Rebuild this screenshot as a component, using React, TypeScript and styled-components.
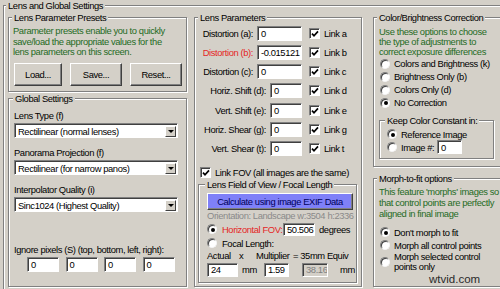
import styled, { createGlobalStyle } from "styled-components";

const FACE = "#d4d0c8";
const GREEN = "#1f6b1f";
const RED = "#e42626";

const GlobalStyle = createGlobalStyle`
  * { box-sizing: border-box; }
  html, body { margin: 0; padding: 0; background: ${FACE}; }
  body {
    font-family: "Liberation Sans", Arial, sans-serif;
    font-size: 9.4px;
    letter-spacing: -0.4px;
    color: #000;
  }
`;

const Window = styled.div`
  position: relative;
  width: 500px;
  height: 289px;
  overflow: hidden;
  background: ${FACE};
`;

const Group = styled.fieldset<{ $w?: number; $h: number; $mt?: number; $ml?: number }>`
  margin: ${(p) => p.$mt ?? 0}px 0 0 ${(p) => p.$ml ?? 0}px;
  padding: 0;
  min-inline-size: 0;
  flex-shrink: 0;
  width: ${(p) => (p.$w ? `${p.$w}px` : "auto")};
  height: ${(p) => p.$h}px;
  border: 1px solid #808080;
  box-shadow: inset 1px 1px 0 #fff, 1px 1px 0 #fff;
`;

const Legend = styled.legend<{ $x?: number }>`
  margin-left: ${(p) => p.$x ?? 3}px;
  padding: 0 2px;
  height: 11px;
  line-height: 11px;
  background: ${FACE};
  white-space: nowrap;
`;

const Columns = styled.div`
  display: flex;
  align-items: flex-start;
  padding: 1px 0 0 4px;
`;

const LeftCol = styled.div`
  width: 179px;
  display: flex;
  flex-direction: column;
  gap: 1px;
`;

const MidCol = styled.div`
  width: 168px;
  margin-left: 7px;
`;

const RightCol = styled.div`
  width: 132px;
  margin-left: 11px;
  display: flex;
  flex-direction: column;
`;

const Hint = styled.div<{ $lh: number }>`
  color: ${GREEN};
  line-height: ${(p) => p.$lh}px;
  white-space: nowrap;
`;

const PresetsBody = styled.div`
  padding: 3px 0 0 4px;
`;

const ButtonRow = styled.div`
  display: flex;
  gap: 8px;
  margin: 5.5px 0 0 1px;
`;

const PushButton = styled.div<{ $w: number }>`
  width: ${(p) => p.$w}px;
  height: 23px;
  display: flex;
  align-items: center;
  justify-content: center;
  background: ${FACE};
  border: 1px solid;
  border-color: #fff #404040 #404040 #fff;
  box-shadow: inset -1px -1px 0 #808080;
`;

const GlobalBody = styled.div`
  display: flex;
  flex-direction: column;
  padding: 6px 0 0 5px;
`;

const FieldLabel = styled.div<{ $mt?: number }>`
  height: 11px;
  line-height: 11px;
  margin: ${(p) => p.$mt ?? 0}px 0 2px;
  white-space: nowrap;
`;

const Sunken = `
  background: #fff;
  border: 1px solid;
  border-color: #808080 #fff #fff #808080;
  box-shadow: inset 1px 1px 0 #404040;
`;

const Select = styled.div<{ $last?: boolean }>`
  ${Sunken}
  width: 164px;
  height: 15px;
  display: flex;
  align-items: center;
  padding: 1px 1px 0 2px;
  margin-bottom: ${(p) => (p.$last ? 0 : 9)}px;
`;

const SelectText = styled.span`
  flex: 1;
  padding-left: 1px;
  white-space: nowrap;
  overflow: hidden;
`;

const DropArrow = styled.span`
  width: 11px;
  height: 11px;
  display: flex;
  align-items: center;
  justify-content: center;
  background: ${FACE};
  border: 1px solid;
  border-color: #fff #404040 #404040 #fff;

  &::after {
    content: "";
    border-left: 3px solid transparent;
    border-right: 3px solid transparent;
    border-top: 3px solid #000;
  }
`;

const TextBox = styled.div<{ $w: number; $h?: number; $ml?: number; $off?: boolean }>`
  ${Sunken}
  flex-shrink: 0;
  width: ${(p) => p.$w}px;
  height: ${(p) => p.$h ?? 15}px;
  margin-left: ${(p) => p.$ml ?? 0}px;
  padding-left: 3px;
  display: flex;
  align-items: center;
  white-space: nowrap;
  overflow: hidden;
  background: ${(p) => (p.$off ? FACE : "#fff")};
  color: ${(p) => (p.$off ? "#808080" : "#000")};
`;

const IgnoreRow = styled.div`
  display: flex;
  gap: 6.5px;
  padding-left: 13px;
`;

const ParamsBody = styled.div`
  display: flex;
  flex-direction: column;
  padding: 0.5px 0 0 3px;
`;

const ParamRow = styled.div`
  display: flex;
  align-items: center;
  height: 19.25px;
`;

const ParamField = styled.div`
  width: 104px;
  display: flex;
  justify-content: flex-end;
  align-items: center;
  gap: 4px;
`;

const ParamName = styled.span<{ $red?: boolean }>`
  color: ${(p) => (p.$red ? RED : "#000")};
  white-space: nowrap;
`;

const CheckBox = styled.span<{ $ml?: number }>`
  ${Sunken}
  flex-shrink: 0;
  width: 11px;
  height: 11px;
  margin-left: ${(p) => p.$ml ?? 0}px;
  display: flex;
  align-items: center;
  justify-content: center;
  padding: 1px 0 0 1px;
`;

const LinkText = styled.span`
  margin-left: 4px;
  white-space: nowrap;
`;

const FovLink = styled.div`
  display: flex;
  align-items: center;
  height: 11px;
  margin: 8.5px 0 0 2px;
`;

const FovBody = styled.div`
  display: flex;
  flex-direction: column;
  padding: 0 3px 0 8px;
`;

const CalcButton = styled.div`
  height: 17px;
  margin-top: 3.5px;
  display: flex;
  align-items: center;
  justify-content: center;
  background: #7f80f8;
  color: #00005a;
  white-space: nowrap;
  border: 1px solid;
  border-color: #fff #404040 #404040 #fff;
  box-shadow: inset -1px -1px 0 #808080;
`;

const Orientation = styled.div`
  height: 11px;
  line-height: 11px;
  color: #8a8a8a;
  white-space: nowrap;
`;

const FovRow = styled.div<{ $h: number; $mt?: number }>`
  display: flex;
  align-items: center;
  height: ${(p) => p.$h}px;
  margin-top: ${(p) => p.$mt ?? 0}px;
  white-space: nowrap;
`;

const FovLabel = styled.span<{ $w?: number; $red?: boolean }>`
  margin-left: 5px;
  width: ${(p) => (p.$w ? `${p.$w}px` : "auto")};
  color: ${(p) => (p.$red ? RED : "#000")};
`;

const Caption = styled.span<{ $w?: number; $ml?: number }>`
  flex-shrink: 0;
  width: ${(p) => (p.$w ? `${p.$w}px` : "auto")};
  margin-left: ${(p) => p.$ml ?? 0}px;
`;

const ColorBody = styled.div<{ $pt: number }>`
  display: flex;
  flex-direction: column;
  padding: ${(p) => p.$pt}px 0 0 5px;
`;

const RadioList = styled.div<{ $mt?: number; $pl?: number }>`
  display: flex;
  flex-direction: column;
  margin-top: ${(p) => p.$mt ?? 0}px;
  padding-left: ${(p) => p.$pl ?? 1}px;
`;

const RadioRow = styled.div<{ $h?: number }>`
  display: flex;
  align-items: center;
  height: ${(p) => p.$h ?? 13}px;
  white-space: nowrap;
`;

const Radio = styled.span<{ $on?: boolean }>`
  position: relative;
  flex-shrink: 0;
  width: 10px;
  height: 10px;
  border-radius: 50%;
  background: #fff;
  border: 1px solid;
  border-color: #808080 #f4f4f4 #f4f4f4 #808080;
  box-shadow: inset 1px 1px 0 #404040;

  &::after {
    content: "";
    display: ${(p) => (p.$on ? "block" : "none")};
    position: absolute;
    left: 2.5px;
    top: 2.5px;
    width: 4px;
    height: 4px;
    border-radius: 50%;
    background: #000;
  }
`;

const RadioText = styled.span<{ $w?: number; $lh?: number }>`
  margin-left: 4px;
  width: ${(p) => (p.$w ? `${p.$w}px` : "auto")};
  line-height: ${(p) => p.$lh ?? 13}px;
`;

const Watermark = styled.div`
  position: absolute;
  left: 429px;
  top: 272px;
  font-family: "Liberation Sans", Arial, sans-serif;
  font-size: 11.5px;
  letter-spacing: 0;
  line-height: 14px;
  color: #2a2a2a;
`;

const Tick = () => (
  <svg width="8" height="8" viewBox="0 0 8 8">
    <path d="M1 3.6 L3 5.8 L7 1.4" stroke="#000" strokeWidth="1.7" fill="none" />
  </svg>
);

const params = [
  { name: "Distortion (a):", value: "0", w: 45, link: "a" },
  { name: "Distortion (b):", value: "-0.015121", w: 45, link: "b", red: true },
  { name: "Distortion (c):", value: "0", w: 45, link: "c" },
  { name: "Horiz. Shift (d):", value: "0", w: 32, link: "d" },
  { name: "Vert. Shift (e):", value: "0", w: 32, link: "e" },
  { name: "Horiz. Shear (g):", value: "0", w: 32, link: "g" },
  { name: "Vert. Shear (t):", value: "0", w: 32, link: "t" },
];

const selects = [
  { label: "Lens Type (f)", value: "Rectilinear (normal lenses)" },
  { label: "Panorama Projection (f)", value: "Rectilinear (for narrow panos)" },
  { label: "Interpolator Quality (i)", value: "Sinc1024 (Highest Quality)" },
];

const colorModes = [
  { label: "Colors and Brightness (k)", on: false },
  { label: "Brightness Only (b)", on: false },
  { label: "Colors Only (d)", on: false },
  { label: "No Correction", on: true },
];

export default function App() {
  return (
    <Window>
      <GlobalStyle />
      <Group $w={515} $h={300} $ml={3}>
        <Legend $x={2}>Lens and Global Settings</Legend>
        <Columns>
          <LeftCol>
            <Group $h={80}>
              <Legend>Lens Parameter Presets</Legend>
              <PresetsBody>
                <Hint $lh={10.5}>
                  Parameter presets enable you to quickly
                  <br />
                  save/load the appropriate values for the
                  <br />
                  lens parameters on this screen.
                </Hint>
                <ButtonRow>
                  <PushButton $w={48}>Load...</PushButton>
                  <PushButton $w={52}>Save...</PushButton>
                  <PushButton $w={52}>Reset...</PushButton>
                </ButtonRow>
              </PresetsBody>
            </Group>
            <Group $h={194}>
              <Legend $x={4}>Global Settings</Legend>
              <GlobalBody>
                {selects.map((s, i) => (
                  <div key={s.label}>
                    <FieldLabel>{s.label}</FieldLabel>
                    <Select $last={i === selects.length - 1}>
                      <SelectText>{s.value}</SelectText>
                      <DropArrow />
                    </Select>
                  </div>
                ))}
                <FieldLabel $mt={32}>Ignore pixels (S) (top, bottom, left, right):</FieldLabel>
                <IgnoreRow>
                  {[0, 1, 2, 3].map((i) => (
                    <TextBox key={i} $w={32}>
                      0
                    </TextBox>
                  ))}
                </IgnoreRow>
              </GlobalBody>
            </Group>
          </LeftCol>

          <MidCol>
            <Group $h={275}>
              <Legend>Lens Parameters</Legend>
              <ParamsBody>
                {params.map((p) => (
                  <ParamRow key={p.link}>
                    <ParamField>
                      <ParamName $red={p.red}>{p.name}</ParamName>
                      <TextBox $w={p.w}>{p.value}</TextBox>
                    </ParamField>
                    <CheckBox $ml={7}>
                      <Tick />
                    </CheckBox>
                    <LinkText>Link {p.link}</LinkText>
                  </ParamRow>
                ))}
                <FovLink>
                  <CheckBox>
                    <Tick />
                  </CheckBox>
                  <LinkText>Link FOV (all images are the same)</LinkText>
                </FovLink>
                <Group $w={159} $h={104} $mt={1}>
                  <Legend $x={6}>Lens Field of View / Focal Length</Legend>
                  <FovBody>
                    <CalcButton>Calculate using image EXIF Data</CalcButton>
                    <Orientation>Orientation: Landscape w:3504 h:2336</Orientation>
                    <FovRow $h={14} $mt={1}>
                      <Radio $on />
                      <FovLabel $w={61} $red>
                        Horizontal FOV:
                      </FovLabel>
                      <TextBox $w={32} $h={13}>
                        50.506
                      </TextBox>
                      <Caption $ml={4}>degrees</Caption>
                    </FovRow>
                    <FovRow $h={14}>
                      <Radio />
                      <FovLabel>Focal Length:</FovLabel>
                    </FovRow>
                    <FovRow $h={11}>
                      <Caption $w={32}>Actual</Caption>
                      <Caption $w={17}>x</Caption>
                      <Caption $w={37}>Multiplier</Caption>
                      <Caption>= 35mm Equiv</Caption>
                    </FovRow>
                    <FovRow $h={15} $mt={1}>
                      <TextBox $w={31} $h={14}>
                        24
                      </TextBox>
                      <Caption $w={22} $ml={4}>
                        mm
                      </Caption>
                      <TextBox $w={25} $h={14}>
                        1.59
                      </TextBox>
                      <TextBox $w={26} $h={14} $ml={13} $off>
                        38.16
                      </TextBox>
                      <Caption $ml={12}>mm</Caption>
                    </FovRow>
                  </FovBody>
                </Group>
              </ParamsBody>
            </Group>
          </MidCol>

          <RightCol>
            <Group $h={155}>
              <Legend>Color/Brightness Correction</Legend>
              <ColorBody $pt={4}>
                <Hint $lh={10}>
                  Use these options to choose
                  <br />
                  the type of adjustments to
                  <br />
                  correct exposure differences
                </Hint>
                <RadioList>
                  {colorModes.map((m) => (
                    <RadioRow key={m.label}>
                      <Radio $on={m.on} />
                      <RadioText>{m.label}</RadioText>
                    </RadioRow>
                  ))}
                </RadioList>
                <Group $w={115} $h={44} $mt={6}>
                  <Legend $x={5}>Keep Color Constant in:</Legend>
                  <RadioList $mt={1.5} $pl={7}>
                    <RadioRow>
                      <Radio $on />
                      <RadioText>Reference Image</RadioText>
                    </RadioRow>
                    <RadioRow>
                      <Radio />
                      <RadioText $w={36}>Image #:</RadioText>
                      <TextBox $w={25} $h={14}>
                        0
                      </TextBox>
                    </RadioRow>
                  </RadioList>
                </Group>
              </ColorBody>
            </Group>
            <Group $h={114} $mt={6}>
              <Legend>Morph-to-fit options</Legend>
              <ColorBody $pt={2}>
                <Hint $lh={11}>
                  This feature 'morphs' images so
                  <br />
                  that control points are perfectly
                  <br />
                  aligned in final image
                </Hint>
                <RadioList $mt={6.5}>
                  <RadioRow>
                    <Radio $on />
                    <RadioText>Don't morph to fit</RadioText>
                  </RadioRow>
                  <RadioRow>
                    <Radio />
                    <RadioText>Morph all control points</RadioText>
                  </RadioRow>
                  <RadioRow $h={21}>
                    <Radio />
                    <RadioText $lh={10.5}>
                      Morph selected control
                      <br />
                      points only
                    </RadioText>
                  </RadioRow>
                </RadioList>
              </ColorBody>
            </Group>
          </RightCol>
        </Columns>
      </Group>
      <Watermark>wtvid.com</Watermark>
    </Window>
  );
}
